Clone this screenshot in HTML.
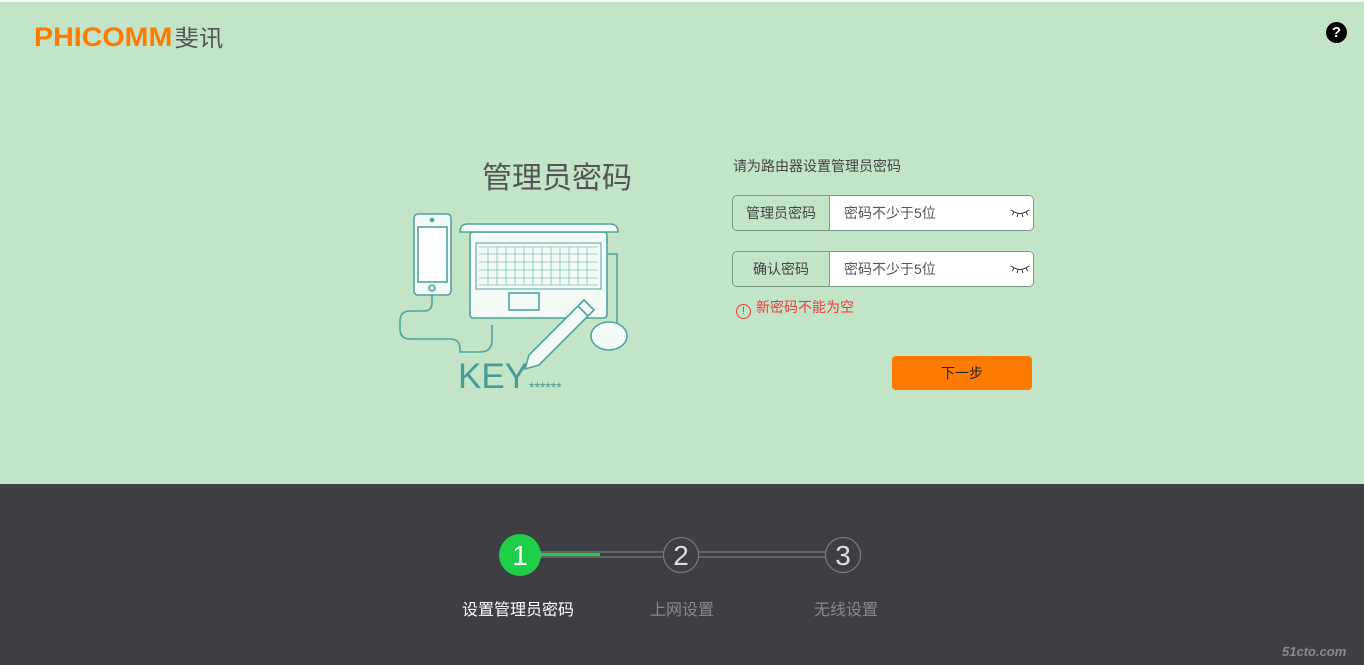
<!DOCTYPE html>
<html><head><meta charset="utf-8"><style>
*{margin:0;padding:0;box-sizing:border-box}
body{width:1364px;height:665px;overflow:hidden;background:#c1e5c6;font-family:"Liberation Sans","Noto Sans CJK SC",sans-serif;position:relative}
.top{position:absolute;left:0;top:0;width:1364px;height:2px;background:#f4f6f4}
.logo{position:absolute;left:34px;top:19px;font-size:27px;font-weight:bold;color:#ff7b00;transform:scaleX(1.06);transform-origin:left}
.logo span{color:#555;font-weight:normal;font-size:23px;margin-left:2px}
.help{position:absolute;left:1326px;top:22px;width:21px;height:21px;border-radius:50%;background:#000;color:#fff;font-weight:bold;font-size:15px;text-align:center;line-height:21px}
.title{position:absolute;left:482px;top:153px;font-size:30px;color:#555}
.sub{position:absolute;left:733px;top:156px;font-size:14px;color:#444}
.field{position:absolute;left:732px;width:302px;height:36px;border:1px solid #7a9a80;border-radius:5px;overflow:hidden;background:#c1e5c6}
.field .lab{position:absolute;left:0;top:0;width:97px;height:34px;line-height:34px;text-align:center;font-size:14px;color:#444;border-right:1px solid #7a9a80}
.field .inp{position:absolute;left:97px;top:0;width:204px;height:34px;background:#fff;line-height:34px;padding-left:14px;font-size:14px;color:#555}
.eye{position:absolute;right:4px;top:11px}
.err{position:absolute;left:736px;top:297px;font-size:14px;color:#f03c3c}
.err i{display:inline-block;width:15px;height:15px;border:1.3px solid #f03c3c;border-radius:50%;font-style:normal;font-size:11px;text-align:center;line-height:13px;margin-right:5px;vertical-align:-2px}
.btn{position:absolute;left:892px;top:356px;width:140px;height:34px;background:#ff7b00;border-radius:4px;text-align:center;line-height:34px;font-size:14px;color:#222}
.foot{position:absolute;left:0;top:484px;width:1364px;height:181px;background:#3e3f43}
.lbl{position:absolute;top:596px;font-size:16px;color:#8a8a8d}
</style></head><body>
<div class="top"></div>
<div class="logo">PHICOMM<span>斐讯</span></div>
<div class="help">?</div>
<div class="title">管理员密码</div>
<svg style="position:absolute;left:398px;top:210px" width="240" height="190" viewBox="398 210 240 190" fill="#f4fbf7" stroke="#4fa3a0" stroke-width="1.6">
<rect x="414" y="214" width="37" height="81" rx="4"/>
<rect x="418" y="227" width="29" height="55" fill="#fff"/>
<circle cx="432" cy="220" r="1.5" fill="#4fa3a0"/>
<circle cx="432" cy="288" r="3"/>
<path d="M432 295 v8 q0 8 -8 8 h-14 q-10 0 -10 10 v8 q0 10 10 10 h40 q10 0 10 10 v3 h20 q12 0 12 -12 v-15" fill="none"/>
<rect x="470" y="232" width="137" height="86" rx="3"/>
<path d="M460 232 q0 -8 8 -8 h142 q8 0 8 8 z"/>
<rect x="476" y="243" width="125" height="46" fill="none" stroke-width="1"/>
<g fill="none" stroke-width="0.8" stroke="#7cc0bc">
<path d="M479 247h119M479 254h119M479 262h119M479 270h119M479 278h119M479 285h119"/>
<path d="M488 247v38M497 247v38M506 247v38M515 247v38M524 247v38M533 247v38M542 247v38M551 247v38M560 247v38M569 247v38M578 247v38M587 247v38"/>
</g>
<rect x="509" y="293" width="30" height="17" fill="none"/>
<path d="M607 254 h10 v70 q0 6 -6 10" fill="none"/>
<ellipse cx="609" cy="336" rx="18" ry="14"/>
<path d="M584 300 l10 10 l-55 55 l-14 4 l4 -14 z"/>
<path d="M578 306 l10 10" fill="none"/>
</svg>
<div style="position:absolute;left:458px;top:358px;font-size:35px;line-height:38px;color:#4a9a98">KEY</div>
<div style="position:absolute;left:529px;top:379px;font-size:14px;color:#4a9a98">******</div>
<div class="sub">请为路由器设置管理员密码</div>
<div class="field" style="top:195px"><div class="lab">管理员密码</div><div class="inp">密码不少于5位<svg class="eye" width="20" height="10" viewBox="0 0 20 10"><path d="M1 3 q9 7 18 0 M4 5 l-2 3 M8 7 l-1 3 M12 7 l1 3 M16 5 l2 3" stroke="#333" fill="none" stroke-width="1"/></svg></div></div>
<div class="field" style="top:251px"><div class="lab">确认密码</div><div class="inp">密码不少于5位<svg class="eye" width="20" height="10" viewBox="0 0 20 10"><path d="M1 3 q9 7 18 0 M4 5 l-2 3 M8 7 l-1 3 M12 7 l1 3 M16 5 l2 3" stroke="#333" fill="none" stroke-width="1"/></svg></div></div>
<div class="err"><i>!</i>新密码不能为空</div>
<div class="btn">下一步</div>
<div class="foot"></div>
<svg style="position:absolute;left:0;top:484px" width="1364" height="181" viewBox="0 484 1364 181">
<path d="M540 552 H664 M540 557 H664 M698 552 H826 M698 557 H826" stroke="#7a7a7d" stroke-width="1.2"/>
<path d="M540 554.5 H600" stroke="#1fcf4a" stroke-width="3"/>
<circle cx="520" cy="555" r="21" fill="#1fcf4a"/>
<circle cx="681" cy="555" r="17.5" fill="#3e3f43" stroke="#7a7a7d" stroke-width="1.2"/>
<circle cx="843" cy="555" r="17.5" fill="#3e3f43" stroke="#7a7a7d" stroke-width="1.2"/>
<g font-family="Liberation Sans,sans-serif" font-size="28" text-anchor="middle">
<text x="520" y="565" fill="#fff">1</text><text x="681" y="565" fill="#ddd">2</text><text x="843" y="565" fill="#ddd">3</text></g>
</svg>
<div class="lbl" style="left:462px;color:#fff">设置管理员密码</div>
<div class="lbl" style="left:650px">上网设置</div>
<div class="lbl" style="left:814px">无线设置</div>
<div style="position:absolute;left:1282px;top:644px;font-size:13px;font-style:italic;font-weight:bold;color:#8a8a8d">51cto.com</div>
</body></html>
